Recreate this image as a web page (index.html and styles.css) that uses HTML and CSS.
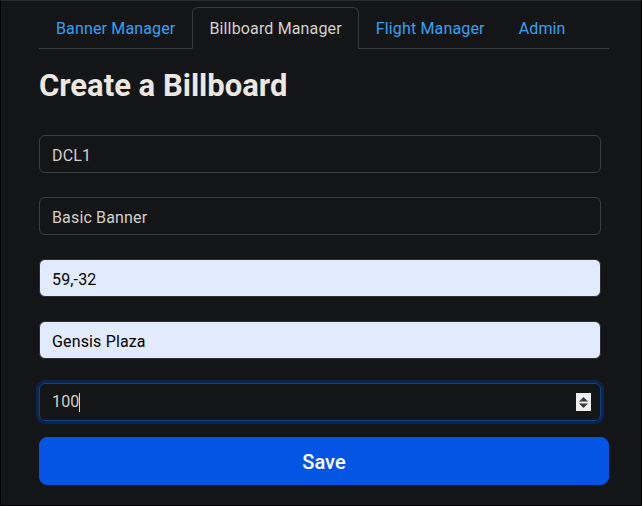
FILE: index.html
```html
<!DOCTYPE html>
<html lang="en">
  <head>
    <meta charset="UTF-8" />
    <meta name="viewport" content="width=device-width, initial-scale=1.0" />
    <title>Create a Billboard</title>
    <link rel="stylesheet" href="styles.css">
  </head>
  <body>
    <div class="page">
      <ul class="nav-tabs">
        <li><a class="nav-link" href="#">Banner Manager</a></li>
        <li><a class="nav-link active" href="#">Billboard Manager</a></li>
        <li><a class="nav-link" href="#">Flight Manager</a></li>
        <li><a class="nav-link" href="#">Admin</a></li>
      </ul>

      <h1>Create a Billboard</h1>

      <form class="billboard-form" onsubmit="return false">
        <input class="form-control" type="text" value="DCL1" />
        <input class="form-control" type="text" value="Basic Banner" />
        <input class="form-control autofill" type="text" value="59,-32" />
        <input class="form-control autofill" type="text" value="Gensis Plaza" />
        <div class="form-control focused">
          <span>100</span><span class="caret"></span>
          <span class="spinner">
            <svg viewBox="0 0 15 13" width="15" height="13">
              <polygon points="7.5,1 12,5.5 3,5.5" fill="#3b3b3b" />
              <polygon points="3,7.5 12,7.5 7.5,12" fill="#3b3b3b" />
            </svg>
          </span>
        </div>
        <button class="btn-save" type="submit">Save</button>
      </form>
    </div>
  </body>
</html>
```

FILE: styles.css
```css
html,
body {
  margin: 0;
  height: 100%;
}

body {
  font-family: Roboto, "Liberation Sans", sans-serif;
  background-color: #000;
  color: #e8e6e3;
  box-sizing: border-box;
  border: 1px solid #000;
  border-top-color: #2b2b2b;
}

.page {
  height: 100%;
  background-color: #131517;
  padding: 6px 32px 0 38px;
  box-sizing: border-box;
}

.nav-tabs {
  display: flex;
  list-style: none;
  margin: 0;
  padding: 0;
  width: 570px;
  border-bottom: 1px solid #383c3f;
}

.nav-link {
  display: block;
  margin-bottom: -1px;
  padding: 9px 16px 7px;
  line-height: 24px;
  font-size: 16px;
  letter-spacing: 0.15px;
  color: #3aa0f2;
  text-decoration: none;
  border: 1px solid transparent;
  border-radius: 6px 6px 0 0;
}

.nav-link.active {
  color: #d6d2cc;
  background-color: #131517;
  border-color: #383c3f #383c3f #131517;
}

h1 {
  margin: 18px 0 30px;
  font-size: 31px;
  line-height: 38px;
  font-weight: 700;
  color: #ece8e1;
}

.billboard-form {
  display: flex;
  flex-direction: column;
  align-items: flex-start;
}

.form-control {
  box-sizing: border-box;
  width: 562px;
  height: 38px;
  margin: 0 0 24px;
  padding: 7px 12px 5px;
  font-family: inherit;
  font-size: 16px;
  line-height: 24px;
  letter-spacing: 0.15px;
  color: #d4cfc9;
  background-color: #131517;
  border: 1px solid #3a3e41;
  border-radius: 6px;
  outline: none;
}

.form-control.autofill {
  color: #000;
  background-color: #e2eafd;
  border-color: #2c2f31;
}

.form-control.focused {
  display: flex;
  align-items: center;
  margin-bottom: 16px;
  padding: 6px 12px;
  border-color: #0e3f8a;
  box-shadow: 0 0 0 3px #0b2550;
}

.caret {
  width: 1px;
  height: 19px;
  background-color: #d4cfc9;
}

.spinner {
  display: flex;
  align-items: center;
  justify-content: center;
  margin-left: auto;
  margin-right: -3px;
  width: 15px;
  height: 18px;
  background-color: #efefef;
}

.btn-save {
  width: 570px;
  height: 48px;
  padding-top: 2px;
  font-family: inherit;
  font-size: 20px;
  font-weight: 500;
  color: #fff;
  background-color: #0455e3;
  border: 1px solid #0455e3;
  border-radius: 8px;
  cursor: pointer;
}
```
